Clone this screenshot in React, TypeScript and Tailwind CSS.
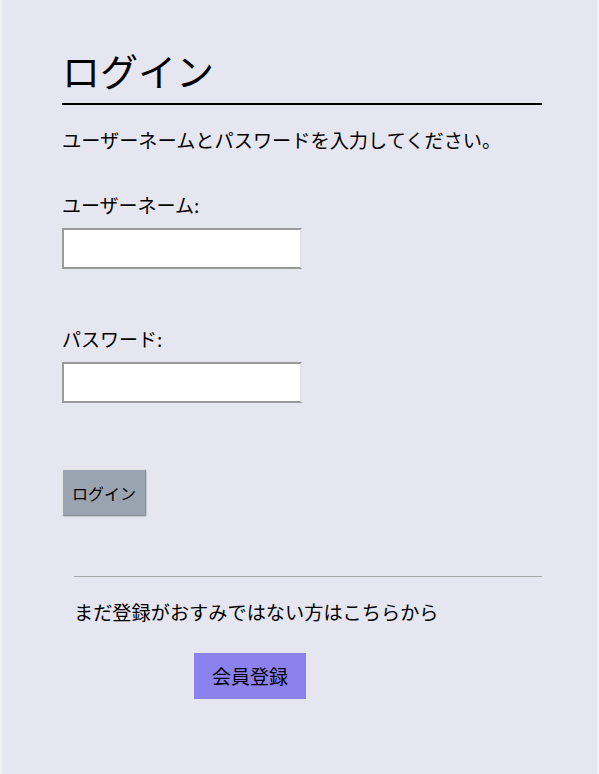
export default function App() {
  return (
    <div className="min-h-[774px] bg-[#f0f0f5] px-[2px] font-['Noto_Sans_CJK_JP',sans-serif] text-black">
      <div className="min-h-[774px] bg-[#e5e6ef] pl-[60px] pt-[47px]">
        <div className="w-[480px]">
          <h1 className="border-b-2 border-black pb-[10px] text-[38px] leading-[46px] font-normal">ログイン</h1>
          <p className="mt-[21px] text-[19.2px] leading-[28px]">ユーザーネームとパスワードを入力してください。</p>

          <label className="mt-[37px] block text-[19px] leading-[28px]">ユーザーネーム:</label>
          <input
            type="text"
            className="mt-[9px] block h-[41px] w-[240px] border-2 border-[#9a9a9a] border-r-[#e2e2e2] bg-white px-2 outline-none"
          />

          <label className="mt-[56px] block text-[19px] leading-[28px]">パスワード:</label>
          <input
            type="password"
            className="mt-[9px] block h-[41px] w-[240px] border-2 border-[#9a9a9a] border-r-[#e2e2e2] bg-white px-2 outline-none"
          />

          <button className="mt-[66px] block h-[47px] w-[84px] rounded-[2px] border border-[#e4e4e4] border-b-[#8a8f96] border-r-[#8a8f96] bg-[#9aa4b0] text-[16px] text-black shadow-[1px_1px_1px_rgba(0,0,0,0.15)]">
            ログイン
          </button>

          <div className="ml-[12px] mt-[60px]">
            <hr className="border-t border-[#a8a8a8]" />
            <p className="mt-[21px] text-[19.2px] leading-[28px]">まだ登録がおすみではない方はこちらから</p>
            <button className="ml-[120px] mt-[27px] block h-[46px] w-[112px] bg-[#8b82ee] text-[19px] text-black">
              会員登録
            </button>
          </div>
        </div>
      </div>
    </div>
  );
}
